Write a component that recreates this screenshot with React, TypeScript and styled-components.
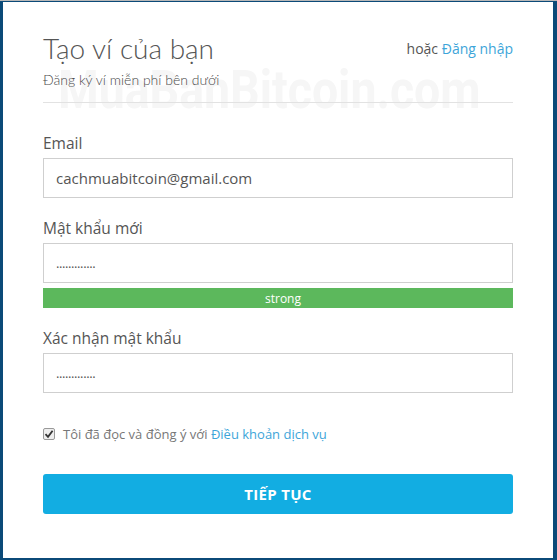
import React from "react";
import styled, { createGlobalStyle } from "styled-components";

const Global = createGlobalStyle`
  html, body { margin: 0; padding: 0; background: #0b4a78; }
  * { box-sizing: border-box; }
`;

const Frame = styled.div`
  width: 557px;
  height: 560px;
  background: #0b4a78;
  padding: 1px 4px 2px 3px;
  border-top: 1px solid #b8b8b8;
  overflow: hidden;
`;

const Card = styled.div`
  position: relative;
  height: 100%;
  background: #fff;
  padding: 30px 40px 0 40px;
  font-family: "Open Sans", "Liberation Sans", sans-serif;
  color: #555;
  overflow: hidden;
`;

const Watermark = styled.div`
  position: absolute;
  left: 55px;
  top: 58px;
  font-family: "Roboto", "DejaVu Sans", sans-serif;
  font-weight: bold;
  font-size: 54px;
  line-height: 60px;
  color: #f6f6f6;
  pointer-events: none;
  white-space: nowrap;
  transform: scaleX(0.86);
  transform-origin: left top;
`;

const Header = styled.div`
  position: relative;
  display: flex;
  justify-content: space-between;
  align-items: flex-start;
`;

const Title = styled.h1`
  margin: 0;
  font-family: "Lato", sans-serif;
  font-weight: 300;
  font-size: 28px;
  line-height: 32px;
  color: #555;
`;

const Sub = styled.div`
  margin-top: 6px;
  font-family: "Lato", sans-serif;
  font-weight: 300;
  font-size: 14px;
  line-height: 20px;
  color: #4a4a4a;
`;

const LoginLink = styled.div`
  margin-top: 7px;
  font-size: 14px;
  color: #555;
  span { color: #3da5d9; }
`;

const Rule = styled.hr`
  position: relative;
  margin: 12px 0 0 0;
  border: 0;
  border-top: 1px solid #e2e2e2;
`;

const Field = styled.div<{ $top: number }>`
  position: relative;
  margin-top: ${(p) => p.$top}px;
`;

const Label = styled.div`
  font-size: 15.5px;
  font-weight: 500;
  color: #555;
  line-height: 20px;
  margin-bottom: 5px;
`;

const Input = styled.div<{ $dots?: boolean }>`
  height: 40px;
  border: 1px solid #cfcfcf;
  padding: 0 12px;
  display: flex;
  align-items: center;
  font-size: ${(p) => (p.$dots ? "13px" : "15px")};
  letter-spacing: ${(p) => (p.$dots ? "-0.4px" : "0")};
  color: #555;
`;

const Strength = styled.div`
  margin-top: 5px;
  height: 20px;
  padding-left: 10px;
  background: #5cb85c;
  color: #fff;
  font-size: 12px;
  font-weight: 500;
  display: flex;
  align-items: center;
  justify-content: center;
`;

const Agree = styled.label`
  position: relative;
  display: flex;
  align-items: center;
  gap: 8px;
  margin-top: 32px;
  font-size: 13px;
  color: #777;
  span { color: #3da5d9; }
`;

const Box = styled.span`
  width: 12px;
  height: 12px;
  border: 1px solid #999;
  border-radius: 2px;
  background: #eee;
  display: inline-flex;
  align-items: center;
  justify-content: center;
`;

const Button = styled.button`
  position: relative;
  display: block;
  margin-top: 31px;
  width: 100%;
  height: 40px;
  border: 0;
  border-radius: 3px;
  background: #12ade2;
  color: #fff;
  font-family: "Open Sans", sans-serif;
  font-weight: 700;
  font-size: 15px;
  letter-spacing: 0.3px;
`;

export default function App() {
  return (
    <>
      <Global />
      <Frame>
        <Card>
          <Watermark>MuaBanBitcoin.com</Watermark>
          <Header>
            <div>
              <Title>Tạo ví của bạn</Title>
              <Sub>Đăng ký ví miễn phí bên dưới</Sub>
            </div>
            <LoginLink>
              hoặc <span>Đăng nhập</span>
            </LoginLink>
          </Header>
          <Rule />
          <Field $top={30}>
            <Label>Email</Label>
            <Input>cachmuabitcoin@gmail.com</Input>
          </Field>
          <Field $top={20}>
            <Label>Mật khẩu mới</Label>
            <Input $dots>.............</Input>
            <Strength>strong</Strength>
          </Field>
          <Field $top={20}>
            <Label>Xác nhận mật khẩu</Label>
            <Input $dots>.............</Input>
          </Field>
          <Agree>
            <Box>
              <svg width="10" height="10" viewBox="0 0 10 10">
                <path d="M1.5 5.2 L4 7.8 L8.6 1.8" fill="none" stroke="#333" strokeWidth="1.8" />
              </svg>
            </Box>
            <div>
              Tôi đã đọc và đồng ý với <span>Điều khoản dịch vụ</span>
            </div>
          </Agree>
          <Button>TIẾP TỤC</Button>
        </Card>
      </Frame>
    </>
  );
}
